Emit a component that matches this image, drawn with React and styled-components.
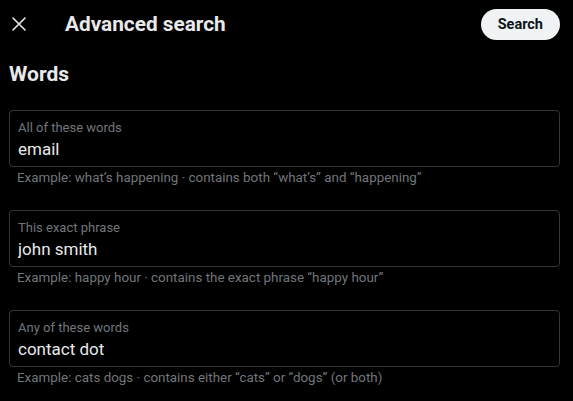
import React from "react";
import styled, { createGlobalStyle } from "styled-components";

const Global = createGlobalStyle`
  html, body {
    margin: 0;
    background: #000;
  }
  body {
    font-family: Roboto, "Noto Sans", Arial, sans-serif;
    color: #e7e9ea;
  }
`;

const Page = styled.div`
  width: 573px;
  height: 401px;
  overflow: hidden;
  background: #000;
`;

const Header = styled.header`
  display: flex;
  align-items: center;
  height: 47px;
  padding: 0 13px 0 9px;
`;

const CloseButton = styled.button`
  display: flex;
  align-items: center;
  justify-content: center;
  width: 20px;
  height: 20px;
  padding: 0;
  border: none;
  background: none;
  color: #e7e9ea;
  cursor: pointer;
`;

const Title = styled.h2`
  flex: 1;
  margin: 0 0 0 36px;
  font-size: 20.8px;
  line-height: 24px;
  font-weight: 700;
  color: #e7e9ea;
`;

const SearchButton = styled.button`
  height: 31px;
  margin-top: 1px;
  padding: 0 17px;
  border: none;
  border-radius: 999px;
  background: #eff3f4;
  color: #0f1419;
  font-family: inherit;
  font-size: 14.5px;
  font-weight: 700;
  cursor: pointer;
`;

const Section = styled.section`
  padding: 0 13px 0 9px;
`;

const SectionTitle = styled.h3`
  margin: 15px 0 24px;
  font-size: 21px;
  line-height: 24px;
  font-weight: 700;
  color: #e7e9ea;
`;

const Field = styled.div`
  margin-bottom: 24px;
`;

const Box = styled.label`
  display: flex;
  flex-direction: column;
  height: 57px;
  box-sizing: border-box;
  padding: 9px 8px 0;
  border: 1px solid #333639;
  border-radius: 4px;
`;

const Label = styled.span`
  font-size: 13px;
  line-height: 16px;
  color: #71767b;
`;

const Input = styled.input`
  margin-top: 2px;
  padding: 0;
  border: none;
  outline: none;
  background: transparent;
  font-family: inherit;
  font-size: 17px;
  line-height: 22px;
  color: #e7e9ea;
`;

const Hint = styled.div`
  padding: 3px 8px 0;
  font-size: 13.4px;
  line-height: 16px;
  color: #71767b;
`;

const fields = [
  {
    label: "All of these words",
    value: "email",
    hint: "Example: what’s happening · contains both “what’s” and “happening”",
  },
  {
    label: "This exact phrase",
    value: "john smith",
    hint: "Example: happy hour · contains the exact phrase “happy hour”",
  },
  {
    label: "Any of these words",
    value: "contact dot",
    hint: "Example: cats dogs · contains either “cats” or “dogs” (or both)",
  },
];

function App() {
  return (
    <Page>
      <Global />
      <Header>
        <CloseButton aria-label="Close">
          <svg width="14" height="14" viewBox="0 0 14 14">
            <path
              d="M1 1L13 13M13 1L1 13"
              stroke="currentColor"
              strokeWidth="1.6"
              strokeLinecap="round"
            />
          </svg>
        </CloseButton>
        <Title>Advanced search</Title>
        <SearchButton>Search</SearchButton>
      </Header>
      <Section>
        <SectionTitle>Words</SectionTitle>
        {fields.map((f) => (
          <Field key={f.label}>
            <Box>
              <Label>{f.label}</Label>
              <Input defaultValue={f.value} />
            </Box>
            <Hint>{f.hint}</Hint>
          </Field>
        ))}
      </Section>
    </Page>
  );
}

export default App;
